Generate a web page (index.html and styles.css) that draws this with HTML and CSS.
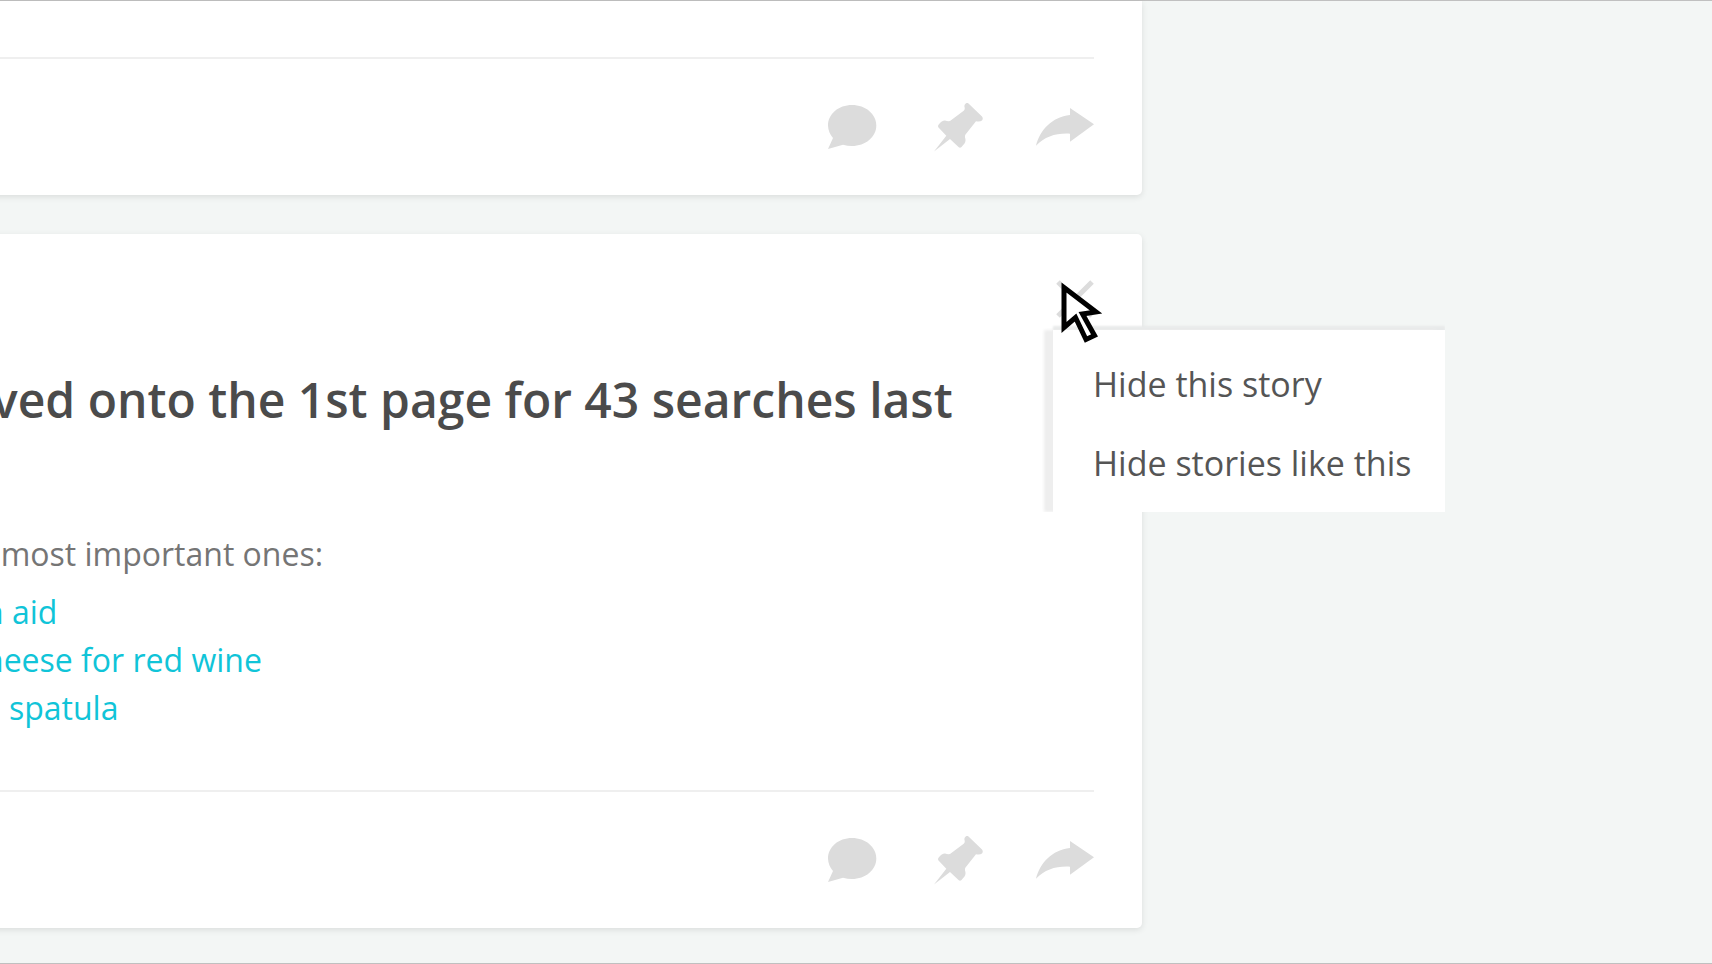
FILE: index.html
```html
<!DOCTYPE html>
<html lang="en">
<head>
    <meta charset="UTF-8">
    <meta name="viewport" content="width=device-width, initial-scale=1.0">
    <title>Stories</title>
    <link rel="stylesheet" href="styles.css">
</head>
<body>
    <!-- Shared icons -->
    <svg class="sprite" aria-hidden="true">
        <symbol id="comment" viewBox="0 0 53 50">
            <path d="M24 2C37.500 2 48.300 11 48.300 22.500S37.500 43 24 43C21 43 18 42.500 15 41.700L0 46L5 35C2 31.500 0 27 0 22.500C0 11 10.500 2 24 2Z"/>
        </symbol>
        <symbol id="pin" viewBox="0 0 49 50">
            <path d="M34.500 0.500L48 13.500Q49.500 15.500 48 17.500Q46 19 42 18.200L31.500 31.500Q30.500 33 31.300 35.500Q32 38.500 30.500 40.500L27.500 44Q26 45.500 24.500 44L16 36L0 48.500L12.300 32.700L4.500 24.500Q3.500 23 4.700 21.500Q8 17.300 11 17.500Q14 18.500 16 18L30 7.500Q31.200 6 30.500 4Q30 2 31.500 0.700Q33 -0.800 34.500 0.500Z"/>
        </symbol>
        <symbol id="share" viewBox="0 0 58 50">
            <path d="M34 5L58 21.300L34 38.700V30.700C20 30 9 33.500 0 42.700C4 27 16 14 34 12Z"/>
        </symbol>
    </svg>

    <main class="feed">
        <article class="card">
            <div class="card-top"></div>
            <footer class="actions">
                <button type="button" aria-label="Comment"><svg width="53" height="50"><use href="#comment"/></svg></button>
                <button type="button" aria-label="Pin"><svg width="49" height="50"><use href="#pin"/></svg></button>
                <button type="button" aria-label="Share"><svg width="58" height="50"><use href="#share"/></svg></button>
            </footer>
        </article>

        <article class="card">
            <header class="card-header">
                <div class="dismiss">
                    <button type="button" class="close" aria-label="Hide">
                        <svg width="38" height="38" viewBox="0 0 38 38"><path d="M2 2L36 36M36 2L2 36"/></svg>
                    </button>
                    <div class="menu">
                        <button type="button">Hide this story</button>
                        <button type="button">Hide stories like this</button>
                    </div>
                    <svg class="cursor" width="46" height="66" viewBox="0 0 46 66"><path d="M6 7.500L38 32L24.500 34L36.500 55.500L28 59.500L17.500 37.500L6 47.500Z"/></svg>
                </div>
            </header>
            <h2 class="title">ved onto the 1st page for 43 searches last</h2>
            <div class="story">
                <p>&nbsp;&nbsp;most important ones:</p>
                <ul>
                    <li><a href="#">n aid</a></li>
                    <li><a href="#">heese for red wine</a></li>
                    <li>&nbsp;&nbsp;&nbsp;<a href="#">spatula</a></li>
                </ul>
            </div>
            <footer class="actions">
                <button type="button" aria-label="Comment"><svg width="53" height="50"><use href="#comment"/></svg></button>
                <button type="button" aria-label="Pin"><svg width="49" height="50"><use href="#pin"/></svg></button>
                <button type="button" aria-label="Share"><svg width="58" height="50"><use href="#share"/></svg></button>
            </footer>
        </article>
    </main>
</body>
</html>
```
FILE: styles.css
```css
* { box-sizing: border-box; }
body { margin: 0; font-family: "Open Sans", Arial, sans-serif; font-size: 32px; line-height: 48px; color: #757575; background-color: #f3f6f5; overflow: hidden; }
button { padding: 0; border: 0; background: none; font: inherit; color: inherit; cursor: pointer; }
svg { display: block; }
.sprite { display: none; }

.feed { display: grid; grid-template-columns: 1fr 570px; align-content: start; gap: 39px 0; min-height: 100vh; border-top: 1px solid #c0c0c0; border-bottom: 1px solid #c0c0c0; }
/* cards run off the left side of the window */
.card { grid-column: 1; margin-left: -16px; background-color: #fff; border-radius: 5px; box-shadow: 0 2px 6px rgba(0, 0, 0, 0.1); }
.card:first-child { border-top-right-radius: 0; }
.card-top { height: 56px; }

.card-header { display: flex; justify-content: flex-end; padding: 46px 48px; }
.dismiss { position: relative; }
.close { display: block; }
.close svg { fill: none; stroke: #dcdcdc; stroke-width: 5; }
.cursor { position: absolute; top: 0; left: 2px; fill: #fff; stroke: #000; stroke-width: 5; pointer-events: none; }
.menu { position: absolute; top: 50px; left: -3px; width: 392px; padding: 15px 0 9px 40px; background-color: #fff; box-shadow: -9px 0 3px #eee, 0 -4px 2px #e8eaea; clip-path: inset(-6px 0 0 -12px); }
.menu button { display: block; font-size: 34px; line-height: 79px; color: #555; white-space: nowrap; }

.title { margin: 4px 0 98px 8px; font-size: 48px; font-weight: 600; line-height: 64px; color: #4b4b4b; white-space: nowrap; }
.story { padding-bottom: 58px; }
.story p { margin: 0 0 10px; }
.story ul { margin: 0; padding: 0; list-style: none; }
.story a { color: #10c4d8; text-decoration: none; }

.actions { display: flex; justify-content: flex-end; gap: 53px; margin-right: 48px; padding: 44px 0 42px; border-top: 2px solid #efefef; }
.actions svg { fill: #dcdcdc; }
```
